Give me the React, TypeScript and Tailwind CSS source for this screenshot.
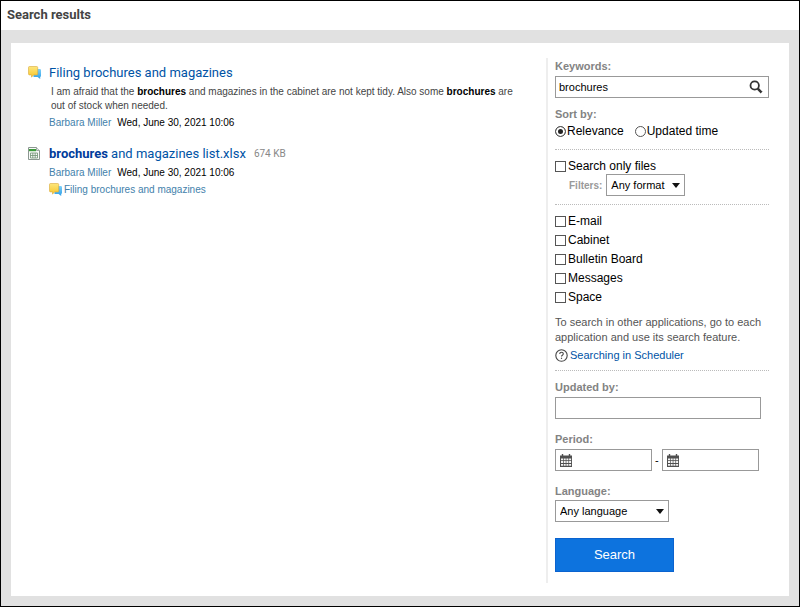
import type { ReactNode } from "react";

const applications = ["E-mail", "Cabinet", "Bulletin Board", "Messages", "Space"];

function TopicIcon() {
  return (
    <svg viewBox="0 0 13 13" className="h-[13px] w-[13px] shrink-0" aria-hidden="true">
      <defs>
        <linearGradient id="topic-yellow" x1="0" y1="0" x2="0" y2="1">
          <stop offset="0" stopColor="#fde77c" />
          <stop offset="1" stopColor="#f8c62c" />
        </linearGradient>
        <linearGradient id="topic-blue" x1="0" y1="0" x2="0" y2="1">
          <stop offset="0" stopColor="#7fd0f8" />
          <stop offset="1" stopColor="#2d9fe8" />
        </linearGradient>
      </defs>
      <path d="M5.5 3h6.3Q13 3 13 4.2v5.6q0 1-.8 1.1v2L9.6 11H5.5z" fill="url(#topic-blue)" />
      <path
        d="M1.5.5h7.2q1 0 1 1v6.4q0 1-1 1H5.6l-2.1 2.3V8.9h-2q-1 0-1-1V1.5q0-1 1-1z"
        fill="url(#topic-yellow)"
        stroke="#d9a93a"
        strokeWidth=".6"
      />
    </svg>
  );
}

function SheetIcon() {
  return (
    <svg viewBox="0 0 12 13" className="h-[13px] w-3 shrink-0" aria-hidden="true">
      <path d="M.5.5h8l3 3v9H.5z" fill="#f8faf8" stroke="#8b9790" />
      <path d="M8.5.5v3h3" fill="#dfe5e1" stroke="#8b9790" strokeWidth=".8" />
      <path d="M1 2h7v2.2H1z" fill="#3c9a3c" />
      <path d="M2.5 6h7v5h-7zM2.5 8.5h7M4.8 6v5M7.2 6v5" fill="none" stroke="#6d9072" strokeWidth=".8" />
    </svg>
  );
}

function SearchIcon() {
  return (
    <svg viewBox="0 0 14 14" className="h-[14px] w-[14px]" fill="none" stroke="#333" aria-hidden="true">
      <circle cx="5.7" cy="5.5" r="4.2" strokeWidth="1.8" />
      <path d="M8.8 8.7l3.8 3.8" strokeWidth="2.5" />
    </svg>
  );
}

function HelpIcon() {
  return (
    <svg viewBox="0 0 13 13" className="h-[13px] w-[13px] shrink-0" fill="none" stroke="#444" aria-hidden="true">
      <circle cx="6.5" cy="6.5" r="5.7" strokeWidth="1.1" />
      <path d="M4.7 5.1q0-1.9 1.8-1.9t1.8 1.6q0 .9-.9 1.4t-.9 1.4" strokeWidth="1.1" />
      <path d="M6.5 8.7v1.2" strokeWidth="1.2" />
    </svg>
  );
}

function CalendarIcon() {
  return (
    <svg viewBox="0 0 12 13" className="h-[13px] w-3 shrink-0" aria-hidden="true">
      <path d="M0 1.5h12V13H0z" fill="#505050" />
      <path d="M2.5 0v2.5M9.5 0v2.5" stroke="#505050" strokeWidth="1.4" />
      <path
        d="M1 4.5h2v1.7H1zM3.7 4.5h2v1.7h-2zM6.4 4.5h2v1.7h-2zM9.1 4.5h2v1.7h-2zM1 7.1h2v1.8H1zM3.7 7.1h2v1.8h-2zM6.4 7.1h2v1.8h-2zM9.1 7.1h2v1.8h-2zM1 9.9h2v1.8H1zM3.7 9.9h2v1.8h-2zM6.4 9.9h2v1.8h-2zM9.1 9.9h2v1.8h-2z"
        fill="#f4f4f4"
      />
    </svg>
  );
}

function Meta() {
  return (
    <p className="flex gap-[6px] text-[10px] leading-[17px] text-black">
      <a href="#user" className="text-[#4381ab]">Barbara Miller</a>
      <span>Wed, June 30, 2021 10:06</span>
    </p>
  );
}

function FieldLabel({ htmlFor, children }: { htmlFor: string; children: ReactNode }) {
  return (
    <label htmlFor={htmlFor} className="block text-[11px] leading-4 font-bold text-[#838383]">
      {children}
    </label>
  );
}

function Checkbox({ label }: { label: string }) {
  return (
    <label className="flex items-center gap-[2px] text-xs leading-4">
      <input type="checkbox" className="mt-[1px] h-[11px] w-[11px] appearance-none border border-[#555] bg-white checked:bg-[#555]" />
      {label}
    </label>
  );
}

function Radio({ label, defaultChecked }: { label: string; defaultChecked?: boolean }) {
  return (
    <label className="flex items-center gap-[1px] text-xs leading-[19px]">
      <input
        type="radio"
        name="sort"
        defaultChecked={defaultChecked}
        className="h-[11px] w-[11px] appearance-none rounded-full border border-[#555] bg-white checked:bg-[#222] checked:shadow-[inset_0_0_0_2px_#fff]"
      />
      {label}
    </label>
  );
}

function Select({ id, label, className }: { id: string; label: string; className: string }) {
  return (
    <div className={`relative ${className}`}>
      <select id={id} className="block h-[22px] w-full appearance-none border border-[#999] bg-white pr-3 pl-1 text-[11px] text-black">
        <option>{label}</option>
      </select>
      <svg viewBox="0 0 8 5" className="pointer-events-none absolute top-[9px] right-[5px] h-[5px] w-2" aria-hidden="true">
        <path d="M0 0h8L4 5z" fill="#111" />
      </svg>
    </div>
  );
}

function DateField({ label }: { label: string }) {
  return (
    <div className="flex h-[22px] w-[97px] items-center border border-[#999] pl-1">
      <CalendarIcon />
      <input type="text" aria-label={label} className="min-w-0 flex-1 px-1 text-[11px] outline-none" />
    </div>
  );
}

export default function App() {
  return (
    <div className="flex min-h-screen flex-col border border-black bg-[#e1e1e1] font-['Liberation_Sans',Arial,sans-serif] text-[#222]">
      <header className="bg-white px-[6px] pt-1 pb-[6px]">
        <h1 className="font-[Roboto,Arial,sans-serif] text-[13px] leading-[19px] font-bold text-[#444]">Search results</h1>
      </header>

      <div className="flex flex-1 px-[10px] pt-[13px] pb-[10px]">
        <div className="flex flex-1 bg-white pt-[15px] pr-5 pb-[13px] pl-[17px]">
          <main className="min-w-0 flex-1 pt-[6px] pr-[22px]">
            <article className="flex gap-2">
              <div className="pt-[2px]">
                <TopicIcon />
              </div>
              <div>
                <h2 className="font-[Roboto,Arial,sans-serif] text-[13px] leading-[18px]">
                  <a href="#topic" className="text-[#0053a5]">Filing brochures and magazines</a>
                </h2>
                <p className="mt-[3px] mb-[1px] pl-[2px] text-[10px] leading-[14px] text-[#444]">
                  I am afraid that the <b className="text-black">brochures</b> and magazines in the cabinet are not kept tidy. Also some{" "}
                  <b className="text-black">brochures</b> are out of stock when needed.
                </p>
                <Meta />
              </div>
            </article>

            <article className="mt-[14px] flex gap-2">
              <div className="w-[13px] pt-[2px]">
                <SheetIcon />
              </div>
              <div>
                <h2 className="mb-[1px] flex items-center gap-2 font-[Roboto,Arial,sans-serif] text-[13px] leading-[18px]">
                  <a href="#file" className="text-[#0053a5]">
                    <b className="text-[#003b9b]">brochures</b> and magazines list.xlsx
                  </a>
                  <span className="text-[10px] text-[#888]">674 KB</span>
                </h2>
                <Meta />
                <a href="#topic" className="flex items-center gap-[2px] text-[10px] leading-[17px] text-[#4381ab]">
                  <TopicIcon />
                  Filing brochures and magazines
                </a>
              </div>
            </article>
          </main>

          <aside className="w-[223px] shrink-0 border-l-2 border-[#eee] pl-[7px] text-black">
            <form>
              <FieldLabel htmlFor="keywords">Keywords:</FieldLabel>
              <div className="mt-[2px] flex h-[22px] items-center border border-[#999]">
                <input id="keywords" type="text" defaultValue="brochures" className="min-w-0 flex-1 px-[3px] text-[11px] outline-none" />
                <button type="submit" aria-label="Search" className="px-[5px]">
                  <SearchIcon />
                </button>
              </div>

              <fieldset className="mt-2 border-b border-dotted border-[#bbb] pb-2">
                <legend className="text-[11px] leading-4 font-bold text-[#838383]">Sort by:</legend>
                <div className="flex gap-[11px]">
                  <Radio label="Relevance" defaultChecked />
                  <Radio label="Updated time" />
                </div>
              </fieldset>

              <div className="border-b border-dotted border-[#bbb] pt-2 pb-2">
                <Checkbox label="Search only files" />
                <div className="flex items-center gap-1 pl-[14px]">
                  <label htmlFor="filters" className="text-[10px] font-bold text-[#999]">Filters:</label>
                  <Select id="filters" label="Any format" className="w-[79px]" />
                </div>
              </div>

              <div className="border-b border-dotted border-[#bbb] pt-2 pb-[7px]">
                <div className="flex flex-col gap-[3px]">
                  {applications.map((name) => (
                    <Checkbox key={name} label={name} />
                  ))}
                </div>
                <p className="mt-[10px] text-[11px] leading-[15px] text-[#555]">
                  To search in other applications, go to each application and use its search feature.
                </p>
                <a href="#help" className="mt-[2px] flex items-center gap-[2px] text-[11px] leading-4 text-[#0053a5]">
                  <HelpIcon />
                  Searching in Scheduler
                </a>
              </div>

              <div className="mt-2">
                <FieldLabel htmlFor="updated-by">Updated by:</FieldLabel>
                <input id="updated-by" type="text" className="mt-[2px] block h-[22px] w-[206px] border border-[#999] px-1 text-[11px] outline-none" />
              </div>

              <fieldset className="mt-3">
                <legend className="text-[11px] leading-4 font-bold text-[#838383]">Period:</legend>
                <div className="mt-[2px] flex items-center gap-[3px] text-[11px]">
                  <DateField label="Start date" />
                  <span>-</span>
                  <DateField label="End date" />
                </div>
              </fieldset>

              <div className="mt-3">
                <FieldLabel htmlFor="language">Language:</FieldLabel>
                <Select id="language" label="Any language" className="mt-[1px] w-[114px]" />
              </div>

              <button type="submit" className="mt-4 mb-[11px] block h-[34px] w-[119px] border border-[#0b63cf] bg-[#0d73de] text-[13px] text-white">
                Search
              </button>
            </form>
          </aside>
        </div>
      </div>
    </div>
  );
}
